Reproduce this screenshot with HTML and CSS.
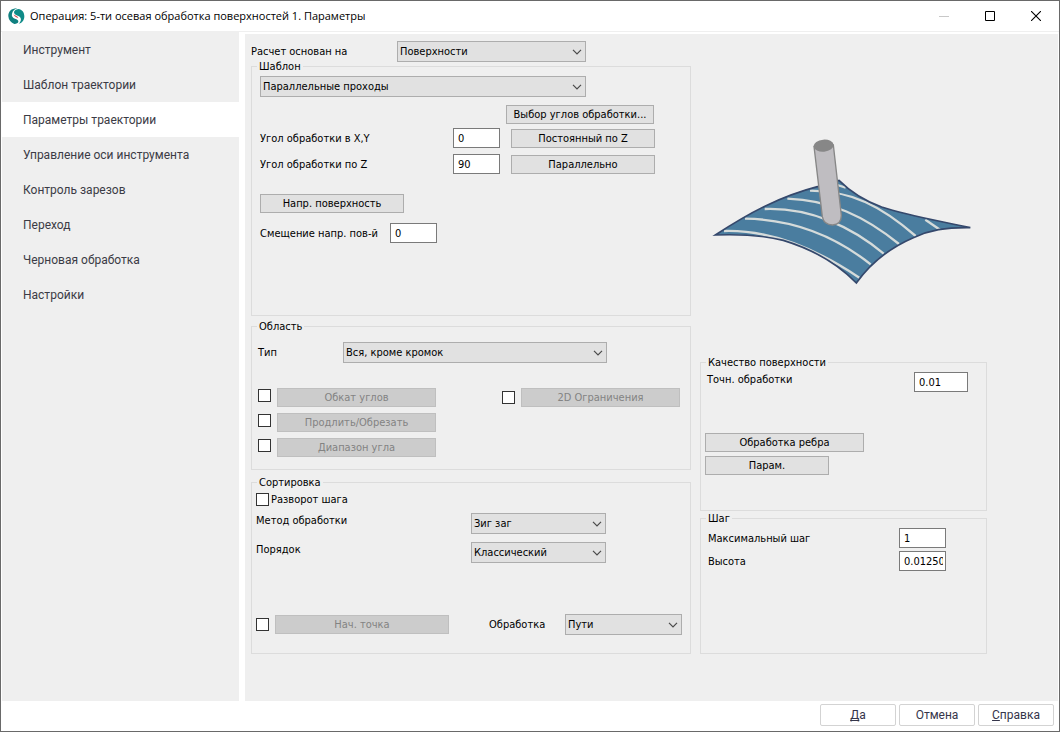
FILE: index.html
```html
<!DOCTYPE html>
<html lang="ru">
<head>
<meta charset="utf-8">
<title>Операция: 5-ти осевая обработка поверхностей 1. Параметры</title>
<link rel="stylesheet" href="styles.css">
</head>
<body>
<svg class="symbols" aria-hidden="true">
  <symbol id="chevron" viewBox="0 0 10 6"><path d="M1 .8 5 4.8 9 .8" fill="none" stroke="#4a4a4a" stroke-width="1.2"/></symbol>
</svg>
<div class="window">
  <header class="titlebar">
    <svg class="logo" viewBox="0 0 51 51" aria-hidden="true">
      <path d="M28 1C11 0 0 11 1 25c1 12 8 19 18 23 7-1 11-3 12-7 1-5-4-7-10-9-7-3-11-8-9-15C14 8 21 3 28 1Z" fill="#0f8080"/>
      <path d="M31 3c-8 1-13 5-13 10 0 6 6 8 13 11 9 4 10 13 4 20-1 2-2 3-4 4 11-2 18-11 18-23C49 13 42 4 31 3Z" fill="#0f8b88"/>
      <path d="M17 19c4 5 12 4 14 12-5-3-13-5-14-12Z" fill="#d8434a"/>
    </svg>
    <h1 class="title">Операция: 5-ти осевая обработка поверхностей 1. Параметры</h1>
    <div class="window-buttons">
      <button class="window-button" type="button" aria-label="Свернуть" disabled><svg viewBox="0 0 10 10"><path d="M0 5.5H10" stroke="#c8c8c8"/></svg></button>
      <button class="window-button" type="button" aria-label="Развернуть"><svg viewBox="0 0 10 10"><path d="M.5.5h9v9h-9Z" fill="none" stroke="#000"/></svg></button>
      <button class="window-button" type="button" aria-label="Закрыть"><svg viewBox="0 0 10 10"><path d="M0 0 10 10M10 0 0 10" stroke="#000" stroke-width="1.1"/></svg></button>
    </div>
  </header>

  <div class="body">
    <nav class="sidebar">
      <a class="nav-item" href="#tool">Инструмент</a>
      <a class="nav-item" href="#pattern">Шаблон траектории</a>
      <a class="nav-item active" href="#path" aria-current="page">Параметры траектории</a>
      <a class="nav-item" href="#axis">Управление оси инструмента</a>
      <a class="nav-item" href="#gouge">Контроль зарезов</a>
      <a class="nav-item" href="#link">Переход</a>
      <a class="nav-item" href="#rough">Черновая обработка</a>
      <a class="nav-item" href="#settings">Настройки</a>
    </nav>

    <main class="content">
      <div class="column">
        <div class="row basis">
          <label class="basis-label" for="basis">Расчет основан на</label>
          <div class="combo combo-basis"><select id="basis"><option>Поверхности</option></select><svg><use href="#chevron"/></svg></div>
        </div>

        <fieldset class="group group-pattern">
          <legend>Шаблон</legend>
          <div class="combo combo-pattern"><select aria-label="Шаблон"><option>Параллельные проходы</option></select><svg><use href="#chevron"/></svg></div>
          <div class="row choose-row"><button class="btn btn-choose" type="button">Выбор углов обработки...</button></div>
          <div class="row angle-row">
            <label class="angle-label" for="angle-xy">Угол обработки в X,Y</label>
            <input class="field" id="angle-xy" type="text" value="0">
            <button class="btn btn-medium" type="button">Постоянный по Z</button>
          </div>
          <div class="row angle-row">
            <label class="angle-label" for="angle-z">Угол обработки по Z</label>
            <input class="field" id="angle-z" type="text" value="90">
            <button class="btn btn-medium" type="button">Параллельно</button>
          </div>
          <div class="row drive-row"><button class="btn btn-medium" type="button">Напр. поверхность</button></div>
          <div class="row">
            <label class="offset-label" for="offset">Смещение напр. пов-й</label>
            <input class="field" id="offset" type="text" value="0">
          </div>
        </fieldset>

        <fieldset class="group group-area">
          <legend>Область</legend>
          <div class="row type-row">
            <label class="type-label" for="area-type">Тип</label>
            <div class="combo combo-type"><select id="area-type"><option>Вся, кроме кромок</option></select><svg><use href="#chevron"/></svg></div>
          </div>
          <div class="area-options">
            <div class="option-list">
              <div class="row option"><input class="check" type="checkbox" aria-label="Обкат углов"><button class="btn btn-wide" type="button" disabled>Обкат углов</button></div>
              <div class="row option"><input class="check" type="checkbox" aria-label="Продлить/Обрезать"><button class="btn btn-wide" type="button" disabled>Продлить/Обрезать</button></div>
              <div class="row option"><input class="check" type="checkbox" aria-label="Диапазон угла"><button class="btn btn-wide" type="button" disabled>Диапазон угла</button></div>
            </div>
            <div class="row option"><input class="check" type="checkbox" aria-label="2D Ограничения"><button class="btn btn-wide" type="button" disabled>2D Ограничения</button></div>
          </div>
        </fieldset>

        <fieldset class="group group-sort">
          <legend>Сортировка</legend>
          <label class="row flip"><input class="check" type="checkbox">Разворот шага</label>
          <div class="row sort-row">
            <label class="sort-label" for="method">Метод обработки</label>
            <div class="combo combo-sort"><select id="method"><option>Зиг заг</option></select><svg><use href="#chevron"/></svg></div>
          </div>
          <div class="row sort-row">
            <label class="sort-label" for="order">Порядок</label>
            <div class="combo combo-sort"><select id="order"><option>Классический</option></select><svg><use href="#chevron"/></svg></div>
          </div>
          <div class="row start-row">
            <div class="row option"><input class="check" type="checkbox" aria-label="Нач. точка"><button class="btn btn-start" type="button" disabled>Нач. точка</button></div>
            <label class="machining-label" for="machining">Обработка</label>
            <div class="combo combo-machining"><select id="machining"><option>Пути</option></select><svg><use href="#chevron"/></svg></div>
          </div>
        </fieldset>
      </div>

      <div class="column">
        <svg class="preview" viewBox="0 0 855 510" role="img" aria-label="Фреза на поверхности">
          <path d="M46 330C150 262 240 214 355 184L417 166C455 204 490 226 545 246C620 271 700 284 811 308C735 307 690 315 640 338C575 366 515 410 469 474C410 413 335 372 250 346C190 331 130 327 46 330Z" fill="#4a7d9f"/>
          <g fill="none" stroke="#d5dbda" stroke-width="7">
            <path d="M72 318C210 314 350 372 478 458"/>
            <path d="M135 281C270 283 400 329 512 418"/>
            <path d="M194 252C330 247 455 305 551 386"/>
            <path d="M262 221C390 225 495 274 597 357"/>
            <path d="M330 197C455 197 545 244 647 333"/>
            <path d="M412 180 437 188"/>
            <path d="M676 284 720 314"/>
          </g>
          <path d="M46 330C150 262 240 214 355 184L417 166C455 204 490 226 545 246C620 271 700 284 811 308C735 307 690 315 640 338C575 366 515 410 469 474C410 413 335 372 250 346C190 331 130 327 46 330Z" fill="none" stroke="#35486c" stroke-width="5"/>
          <path d="M342 64 367 275C370 292 383 300 398 300C415 299 424 288 424 271L400 60Z" fill="#bfbdc1" stroke="#878787" stroke-width="4"/>
          <ellipse cx="371" cy="62" rx="30" ry="18" transform="rotate(-5 371 62)" fill="#878787"/>
        </svg>

        <fieldset class="group group-quality">
          <legend>Качество поверхности</legend>
          <div class="row tolerance-row">
            <label class="tolerance-label" for="tolerance">Точн. обработки</label>
            <input class="field field-wide" id="tolerance" type="text" value="0.01">
          </div>
          <div class="quality-buttons">
            <button class="btn btn-wide" type="button">Обработка ребра</button>
            <button class="btn btn-params" type="button">Парам.</button>
          </div>
        </fieldset>

        <fieldset class="group group-step">
          <legend>Шаг</legend>
          <div class="row">
            <label class="step-label" for="max-step">Максимальный шаг</label>
            <input class="field" id="max-step" type="text" value="1">
          </div>
          <div class="row">
            <label class="step-label" for="height">Высота</label>
            <input class="field" id="height" type="text" value="0.01250">
          </div>
        </fieldset>
      </div>
    </main>
  </div>

  <footer class="footer">
    <button class="dialog-button" type="button"><u>Д</u>а</button>
    <button class="dialog-button" type="button">Отмена</button>
    <button class="dialog-button" type="button"><u>С</u>правка</button>
  </footer>
</div>
</body>
</html>
```
FILE: styles.css
```css
* { box-sizing: border-box; }

body {
  margin: 0;
  background: #fff;
  color: #000;
  font: 11px/15px "DejaVu Sans Condensed", "Noto Sans", sans-serif;
}

button, input, select { margin: 0; font: inherit; color: inherit; }

.symbols { display: none; }

.window {
  display: flex;
  flex-direction: column;
  min-height: 100vh;
  border: 1px solid #696969;
}

/* Title bar */
.titlebar { display: flex; align-items: center; height: 30px; padding-left: 7px; }
.logo { width: 17px; height: 17px; }
.title {
  flex: 1;
  margin: 0 0 0 5px;
  font: 11px/16px "Open Sans", "Noto Sans", sans-serif;
}
.window-buttons { display: flex; }
.window-button {
  display: grid;
  place-items: center;
  width: 46px;
  height: 29px;
  padding: 0;
  border: 0;
  background: none;
}
.window-button svg { width: 10px; height: 10px; }

/* Body */
.body { display: flex; flex: 1; gap: 6px; padding: 0 1px; border-top: 1px solid #efefef; }

.sidebar { width: 237px; background: #efefef; }
.nav-item {
  display: block;
  padding: 1px 0 0 21px;
  color: #3b3b45;
  font: 12px/34px Roboto, sans-serif;
  text-decoration: none;
}
.nav-item.active { background: #fff; }

.content {
  display: grid;
  flex: 1;
  grid-template-columns: 440fr 287fr;
  gap: 9px;
  align-items: start;
  margin-top: 2px;
  padding: 7px 71px 46px 6px;
  background: #efefef;
}
.column { display: flex; flex-direction: column; }
.row { display: flex; align-items: center; }

/* Controls */
.combo { display: grid; align-items: center; }
.combo > * { grid-area: 1 / 1; }
.combo select {
  width: 100%;
  height: 21px;
  padding: 0 20px 0 2px;
  border: 1px solid #adadad;
  border-radius: 0;
  appearance: none;
  background: #e1e1e1;
}
.combo svg { justify-self: end; width: 10px; height: 6px; margin-right: 4px; pointer-events: none; }

.btn {
  height: 19px;
  padding: 0;
  border: 1px solid #adadad;
  background: #e1e1e1;
  line-height: 17px;
  text-align: center;
  white-space: nowrap;
}
.btn:disabled { border-color: #bfbfbf; background: #ccc; color: #838383; }
.btn-medium { width: 144px; }
.btn-wide { width: 159px; }
.btn-choose { width: 148px; }
.btn-start { width: 174px; }
.btn-params { width: 124px; }

.field {
  width: 47px;
  height: 20px;
  padding: 0 2px 0 4px;
  border: 1px solid #7a7a7a;
  background: #fff;
}
.field-wide { width: 54px; }

.check {
  flex: none;
  width: 13px;
  height: 13px;
  border: 1px solid #333;
  appearance: none;
  background: #fff;
}

.group {
  --inset: 4px;
  min-width: 0;
  margin: 0;
  padding: 2px var(--inset);
  border: 1px solid #dcdcdc;
}
.group legend { margin-left: calc(5px - var(--inset)); padding: 0 2px; line-height: 15px; }

.basis-label { width: 146px; }
.combo-basis { width: 189px; }

/* Pattern */
.group-pattern { --inset: 8px; min-height: 257px; margin-top: -3px; }
.combo-pattern { width: 326px; }
.choose-row { margin: 8px 0 4px 246px; }
.angle-row { margin-bottom: 6px; }
.angle-label { width: 193px; }
.angle-row .btn { margin-left: 11px; }
.drive-row { margin: 20px 0 10px; }
.offset-label { width: 130px; }

/* Area */
.group-area { --inset: 6px; min-height: 151px; margin-top: 3px; padding-top: 8px; }
.type-label { width: 85px; }
.combo-type { width: 264px; }
.area-options { display: flex; justify-content: space-between; align-items: start; margin: 25px 4px 0 0; }
.option { gap: 6px; }
.option-list { display: grid; gap: 6px; }
.option-list .option { align-items: start; }
.option-list .check { margin-top: 1px; }

/* Sorting */
.group-sort { min-height: 179px; margin-top: 5px; }
.flip { gap: 2px; margin-bottom: 6px; }
.sort-row { align-items: start; margin-bottom: 8px; }
.sort-label { width: 215px; }
.combo-sort { width: 135px; }
.start-row { margin-top: 51px; }
.machining-label { width: 76px; margin-left: 40px; }
.combo-machining { width: 117px; }

/* Preview, quality and step */
.preview { width: 285px; margin: 84px 0 60px; }
.group-quality { min-height: 156px; }
.tolerance-row { align-items: start; }
.tolerance-label { width: 209px; padding-left: 2px; }
.quality-buttons { display: flex; flex-direction: column; align-items: flex-start; gap: 4px; margin-top: 41px; }
.group-step { --inset: 7px; min-height: 143px; }
.group-step .row { margin-bottom: 3px; }
.step-label { width: 191px; }

/* Footer */
.footer { display: flex; justify-content: flex-end; gap: 3px; height: 30px; padding: 3px 5px 5px; }
.dialog-button {
  width: 76px;
  padding: 1px 0 0;
  border: 1px solid #d3d3d3;
  border-radius: 2px;
  background: #fff;
  color: #35354a;
  font: 12px/19px Roboto, sans-serif;
}
.dialog-button u { text-decoration-skip-ink: none; }
```
